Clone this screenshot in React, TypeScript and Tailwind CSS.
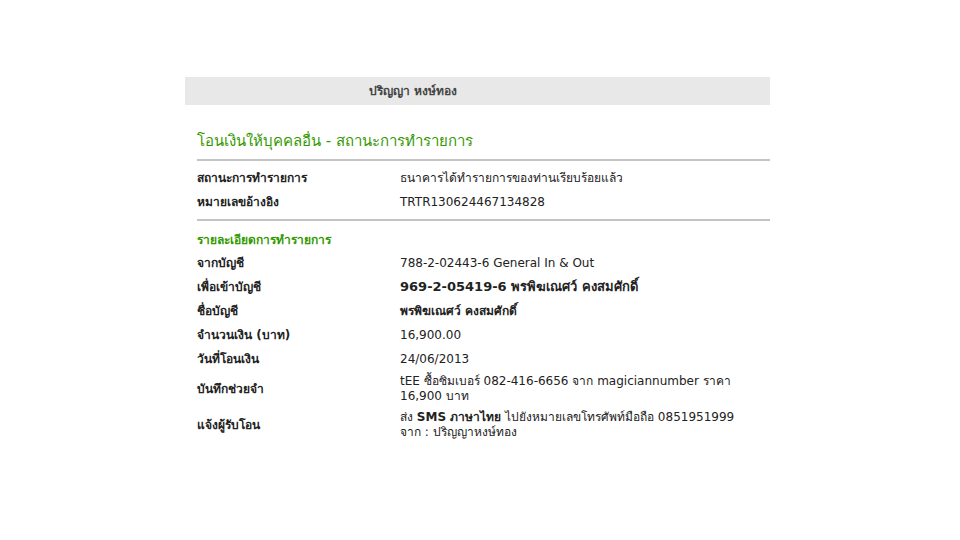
export default function App() {
  const font = { fontFamily: '"DejaVu Sans", Tahoma, sans-serif' };
  return (
    <div className="w-[960px] h-[540px] bg-white text-[#222]" style={font}>
      <div className="pt-[77px] pl-[185px] w-[770px]">
        <div className="w-[585px]">
          <div className="h-[28px] bg-[#e8e8e8] flex items-center pl-[184px] text-[12px] font-bold text-[#444]">
            ปริญญา หงษ์ทอง
          </div>
          <div className="pl-[12px] pt-[26px]">
            <div className="text-[15px] text-[#339900] leading-[20px]">
              โอนเงินให้บุคคลอื่น - สถานะการทำรายการ
            </div>
            <div className="mt-[8px] h-[2px] bg-[#c4c4c4]" />
            <div className="pt-[5px] pb-[5px] text-[12px]">
              <Row label="สถานะการทำรายการ" value="ธนาคารได้ทำรายการของท่านเรียบร้อยแล้ว" />
              <Row label="หมายเลขอ้างอิง" value="TRTR130624467134828" />
            </div>
            <div className="h-[2px] bg-[#c4c4c4]" />
            <div className="pt-[7px] text-[12px]">
              <div className="h-[23px] flex items-center font-bold text-[#339900]">รายละเอียดการทำรายการ</div>
              <Row label="จากบัญชี" value="788-2-02443-6 General In & Out" />
              <Row label="เพื่อเข้าบัญชี" value={<span className="font-bold text-[13px]">969-2-05419-6 พรพิฆเณศว์ คงสมศักดิ์</span>} />
              <Row label="ชื่อบัญชี" value={<span className="font-bold">พรพิฆเณศว์ คงสมศักดิ์</span>} />
              <Row label="จำนวนเงิน (บาท)" value="16,900.00" />
              <Row label="วันที่โอนเงิน" value="24/06/2013" />
              <Row
                tall
                label="บันทึกช่วยจำ"
                value={<span>tEE ซื้อซิมเบอร์ 082-416-6656 จาก magiciannumber ราคา<br />16,900 บาท</span>}
              />
              <Row
                tall
                label="แจ้งผู้รับโอน"
                value={
                  <span>
                    ส่ง <b>SMS ภาษาไทย</b> ไปยังหมายเลขโทรศัพท์มือถือ 0851951999<br />จาก : ปริญญาหงษ์ทอง
                  </span>
                }
              />
            </div>
          </div>
        </div>
      </div>
    </div>
  );
}

function Row({ label, value, tall }: { label: string; value: React.ReactNode; tall?: boolean }) {
  return (
    <div className={`flex items-center ${tall ? 'min-h-[36px] py-[1px] leading-[15px]' : 'h-[24px]'}`}>
      <div className="w-[203px] shrink-0 font-bold">{label}</div>
      <div>{value}</div>
    </div>
  );
}
